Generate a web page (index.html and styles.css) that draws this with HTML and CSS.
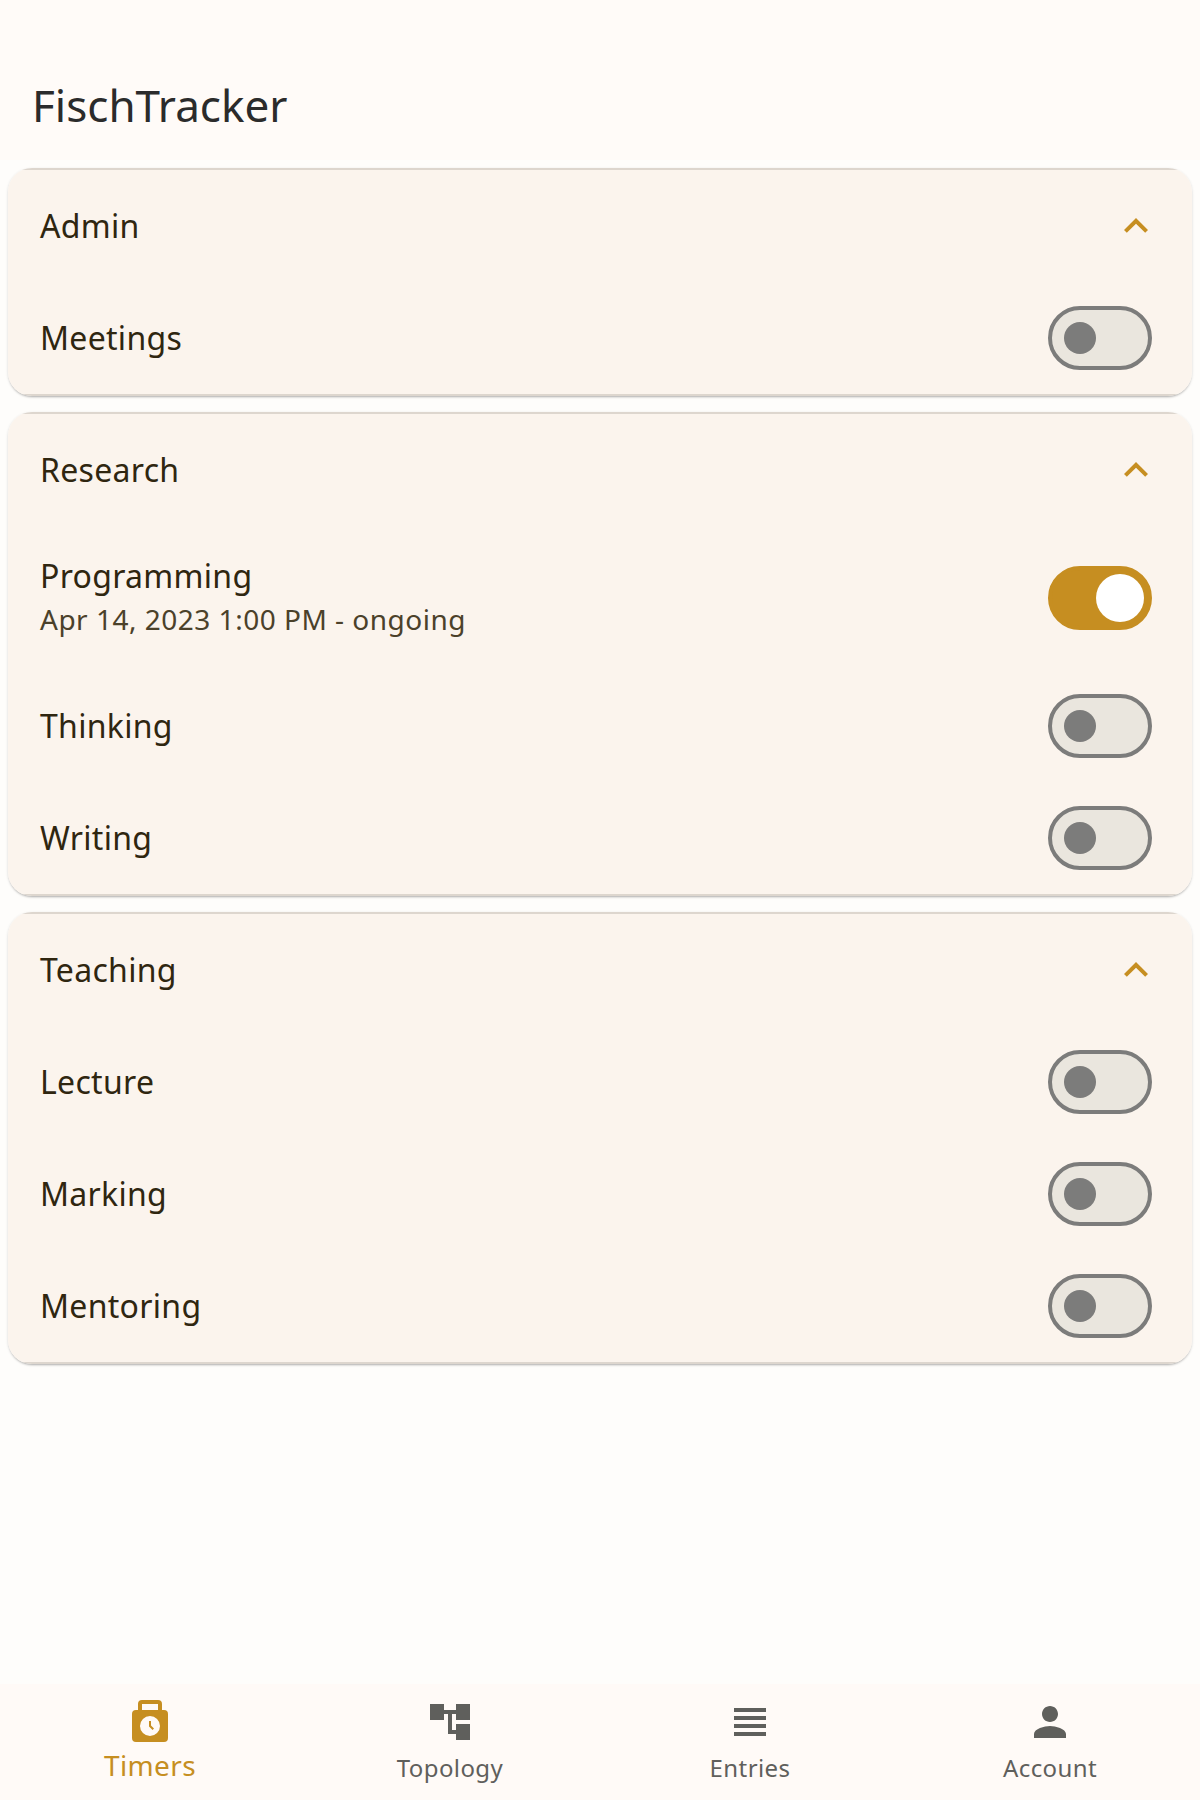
FILE: index.html
```html
<!DOCTYPE html>
<html lang="en">
<head>
<meta charset="utf-8">
<title>FischTracker</title>
<link rel="stylesheet" href="styles.css">
</head>
<body>
<svg class="defs" width="0" height="0" aria-hidden="true">
  <symbol id="chevron" viewBox="0 0 24 24"><path d="M12 8l-6 6 1.41 1.41L12 10.83l4.59 4.58L18 14z"/></symbol>
</svg>
<header class="app-bar"><h1 class="app-title">FischTracker</h1></header>
<main class="content">
  <section class="card">
    <div class="row"><span class="label">Admin</span><svg class="chevron"><use href="#chevron"/></svg></div>
    <div class="row"><span class="label">Meetings</span><span class="switch"></span></div>
  </section>
  <section class="card">
    <div class="row"><span class="label">Research</span><svg class="chevron"><use href="#chevron"/></svg></div>
    <div class="row row-tall">
      <div class="stack"><span class="label">Programming</span><span class="sub">Apr 14, 2023 1:00 PM - ongoing</span></div>
      <span class="switch on"></span>
    </div>
    <div class="row"><span class="label">Thinking</span><span class="switch"></span></div>
    <div class="row"><span class="label">Writing</span><span class="switch"></span></div>
  </section>
  <section class="card">
    <div class="row"><span class="label">Teaching</span><svg class="chevron"><use href="#chevron"/></svg></div>
    <div class="row"><span class="label">Lecture</span><span class="switch"></span></div>
    <div class="row"><span class="label">Marking</span><span class="switch"></span></div>
    <div class="row"><span class="label">Mentoring</span><span class="switch"></span></div>
  </section>
</main>
<nav class="nav">
  <a class="nav-item active">
    <svg class="nav-icon" viewBox="0 0 24 24"><path fill-rule="evenodd" d="M18 6V3a2 2 0 0 0-2-2H8a2 2 0 0 0-2 2v3H5a2 2 0 0 0-2 2v12a2 2 0 0 0 2 2h14a2 2 0 0 0 2-2V8a2 2 0 0 0-2-2zM8 3h8v3H8zM12 19a5 5 0 1 1 0-10 5 5 0 0 1 0 10z"/><path d="M12.5 11.5h-1v2.7l1.79 1.79.71-.71-1.5-1.49z"/></svg>
    <span>Timers</span>
  </a>
  <a class="nav-item">
    <svg class="nav-icon" viewBox="0 0 24 24"><path d="M22 11V3h-7v3H9V3H2v8h7V8h2v10h4v3h7v-8h-7v3h-2V8h2v3z"/></svg>
    <span>Topology</span>
  </a>
  <a class="nav-item">
    <svg class="nav-icon" viewBox="0 0 24 24"><path d="M4 15h16v-2H4v2zm0 4h16v-2H4v2zm0-8h16V9H4v2zm0-6v2h16V5H4z"/></svg>
    <span>Entries</span>
  </a>
  <a class="nav-item">
    <svg class="nav-icon" viewBox="0 0 24 24"><path d="M12 12c2.21 0 4-1.79 4-4s-1.79-4-4-4-4 1.79-4 4 1.79 4 4 4zm0 2c-2.67 0-8 1.34-8 4v2h16v-2c0-2.66-5.33-4-8-4z"/></svg>
    <span>Account</span>
  </a>
</nav>
</body>
</html>
```

FILE: styles.css
```css
* { box-sizing: border-box; }
body {
  margin: 0;
  height: 1800px;
  display: flex;
  flex-direction: column;
  background: #fefdfb;
  font-family: "Noto Sans", sans-serif;
  color: #2f2610;
}
.defs { display: none; }
.app-bar {
  flex: none;
  height: 160px;
  padding: 50px 32px 0;
  display: flex;
  align-items: center;
  background: #fffbf8;
}
.app-title {
  margin: 0;
  font-size: 44px;
  line-height: 56px;
  font-weight: 400;
  color: #2b2b2b;
}
.content {
  flex: 1;
  display: flex;
  flex-direction: column;
  gap: 16px;
  padding: 8px;
}
.card {
  flex: none;
  border-radius: 24px;
  overflow: hidden;
  background: linear-gradient(#ddd6ce 2px, #fbf4ed 2px, #fbf4ed calc(100% - 2px), #ddd6ce calc(100% - 2px));
  padding: 2px 0;
  box-shadow: 0 2px 2px -1px rgba(0,0,0,.2), 0 1px 3px rgba(0,0,0,.14);
}
.row {
  height: 112px;
  padding: 0 40px 0 32px;
  display: flex;
  align-items: center;
  justify-content: space-between;
}
.row-tall { height: 144px; }
.stack { display: flex; flex-direction: column; padding-bottom: 5px; }
.label {
  font-size: 32px;
  line-height: 48px;
  letter-spacing: .3px;
}
.sub {
  font-size: 28px;
  line-height: 39px;
  letter-spacing: .5px;
  color: #4b412a;
}
.chevron {
  width: 48px;
  height: 48px;
  margin-right: -8px;
  fill: #c68e21;
}
.switch {
  width: 104px;
  height: 64px;
  border: 4px solid #7c7c7b;
  border-radius: 32px;
  background: #eae6de;
  display: flex;
  align-items: center;
  padding: 0 12px;
}
.switch::before {
  content: "";
  width: 32px;
  height: 32px;
  border-radius: 50%;
  background: #7c7c7b;
}
.switch.on {
  justify-content: flex-end;
  padding: 0 4px;
  border-color: #c68e21;
  background: #c68e21;
}
.switch.on::before { width: 48px; height: 48px; background: #fff; }
.nav {
  flex: none;
  height: 116px;
  display: grid;
  grid-template-columns: repeat(4, 1fr);
  background: #fffaf7;
}
.nav-item {
  display: flex;
  flex-direction: column;
  align-items: center;
  padding-top: 14px;
  font-size: 24px;
  line-height: 44px;
  letter-spacing: .4px;
  color: #5f5f5c;
}
.nav-item.active { font-size: 28px; line-height: 38px; color: #c68e21; }
.nav-icon { width: 48px; height: 48px; fill: currentColor; }
```
